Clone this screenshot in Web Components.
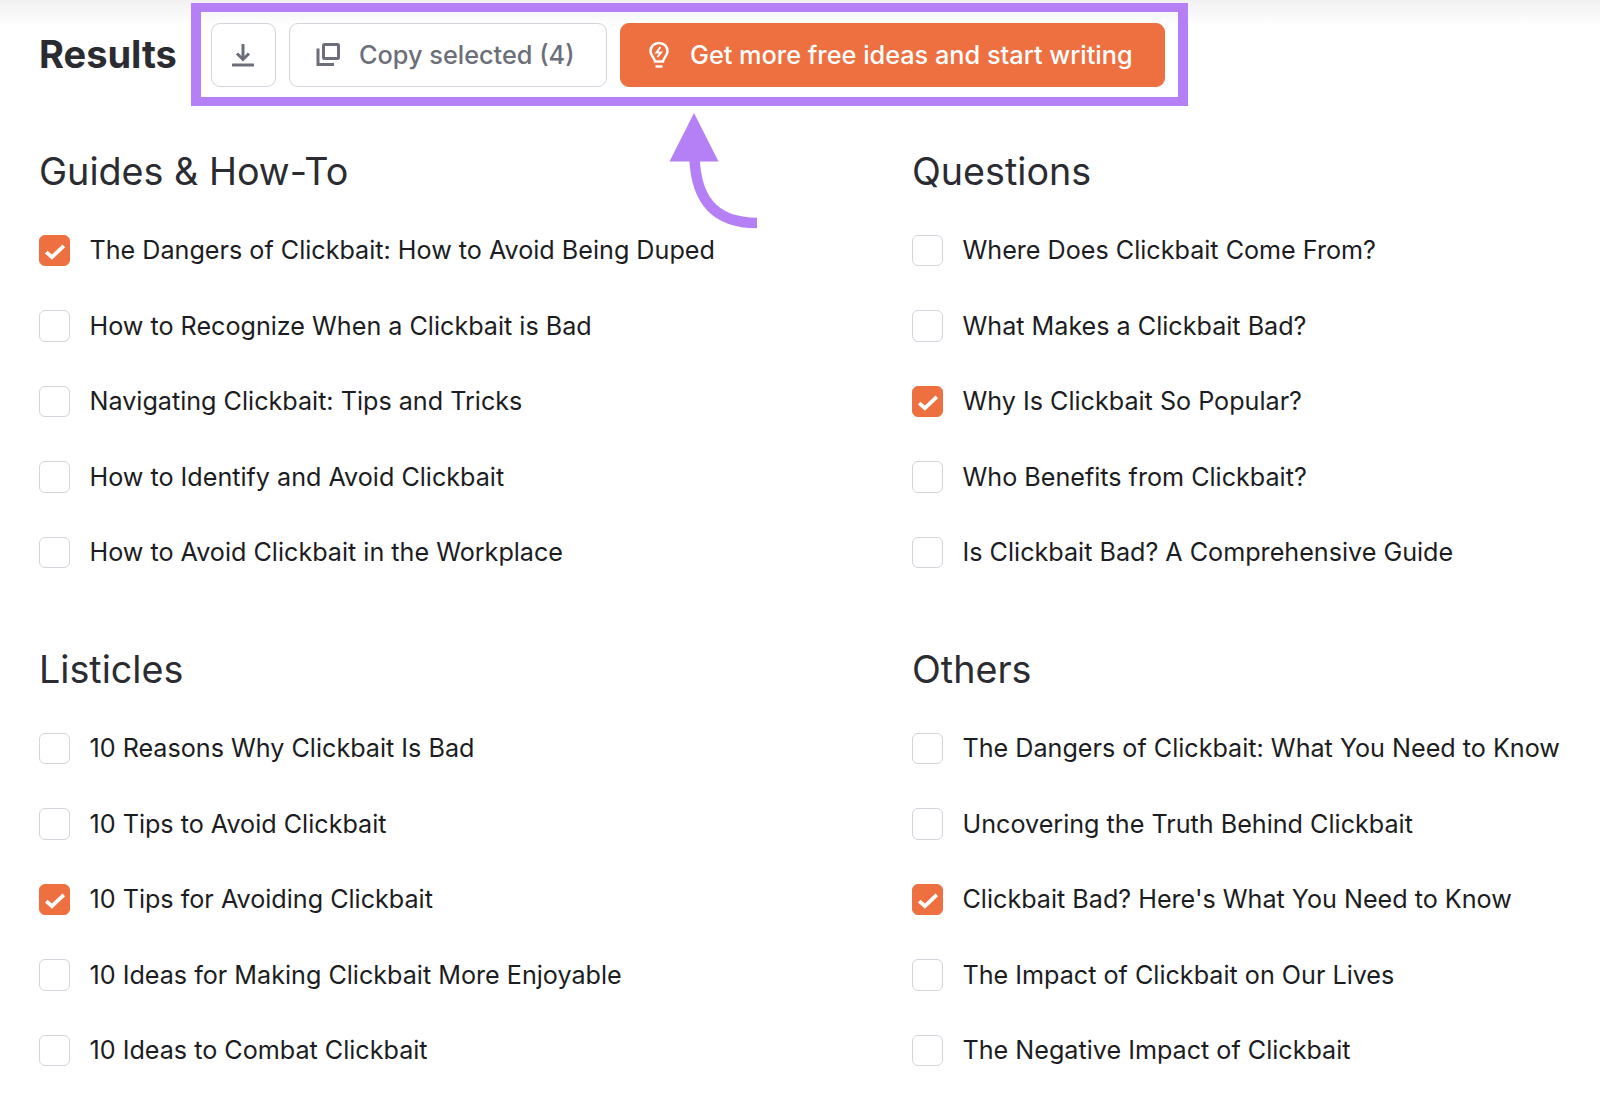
<!DOCTYPE html>
<html>
<head>
<meta charset="utf-8">
<title>Results</title>
<style>
  html, body { margin: 0; padding: 0; }
  body {
    height: 1107px;
    overflow: hidden;
    background: linear-gradient(#f1f1f2, #ffffff 26px) no-repeat #ffffff;
    font-family: Inter, "Liberation Sans", sans-serif;
    color: #1c1d22;
  }
</style>
</head>
<body>
<results-page>
  <results-toolbar slot="toolbar" count="4"></results-toolbar>
  <idea-group heading="Guides &amp; How-To">
    <idea-item checked>The Dangers of Clickbait: How to Avoid Being Duped</idea-item>
    <idea-item>How to Recognize When a Clickbait is Bad</idea-item>
    <idea-item>Navigating Clickbait: Tips and Tricks</idea-item>
    <idea-item>How to Identify and Avoid Clickbait</idea-item>
    <idea-item>How to Avoid Clickbait in the Workplace</idea-item>
  </idea-group>
  <idea-group heading="Questions">
    <idea-item>Where Does Clickbait Come From?</idea-item>
    <idea-item>What Makes a Clickbait Bad?</idea-item>
    <idea-item checked>Why Is Clickbait So Popular?</idea-item>
    <idea-item>Who Benefits from Clickbait?</idea-item>
    <idea-item>Is Clickbait Bad? A Comprehensive Guide</idea-item>
  </idea-group>
  <idea-group heading="Listicles">
    <idea-item>10 Reasons Why Clickbait Is Bad</idea-item>
    <idea-item>10 Tips to Avoid Clickbait</idea-item>
    <idea-item checked>10 Tips for Avoiding Clickbait</idea-item>
    <idea-item>10 Ideas for Making Clickbait More Enjoyable</idea-item>
    <idea-item>10 Ideas to Combat Clickbait</idea-item>
  </idea-group>
  <idea-group heading="Others">
    <idea-item>The Dangers of Clickbait: What You Need to Know</idea-item>
    <idea-item>Uncovering the Truth Behind Clickbait</idea-item>
    <idea-item checked>Clickbait Bad? Here's What You Need to Know</idea-item>
    <idea-item>The Impact of Clickbait on Our Lives</idea-item>
    <idea-item>The Negative Impact of Clickbait</idea-item>
  </idea-group>
</results-page>

<script>
class ResultsPage extends HTMLElement {
  connectedCallback() {
    this.attachShadow({ mode: 'open' });
    this.shadowRoot.innerHTML = `
      <style>
        :host { display: block; position: relative; padding: 3px 0 0 39px; }
        .groups {
          display: grid;
          grid-template-columns: 873px 1fr;
          row-gap: 78px;
          margin-top: 42px;
        }
        .arrow { position: absolute; left: 660px; top: 105px; width: 110px; height: 130px; }
      </style>
      <slot name="toolbar"></slot>
      <div class="groups"><slot></slot></div>
      <svg class="arrow" viewBox="660 105 110 130" fill="none">
        <path d="M694 113L718.500 161.500H669.500Z" fill="#b57ff5"/>
        <path d="M694.500 158C696 196 711 223 757 223" stroke="#b57ff5" stroke-width="10.500"/>
      </svg>
    `;
  }
}
customElements.define('results-page', ResultsPage);

class ResultsToolbar extends HTMLElement {
  connectedCallback() {
    this.attachShadow({ mode: 'open' });
    const count = this.getAttribute('count');
    this.shadowRoot.innerHTML = `
      <style>
        :host { display: flex; align-items: center; }
        h2 {
          margin: 0 15px 0 0;
          width: 137px;
          font-size: 38px;
          line-height: 44px;
          padding-bottom: 2px;
          font-weight: 700;
          color: #2b2c31;
          white-space: nowrap;
        }
        .callout {
          display: flex;
          gap: 13.5px;
          box-sizing: border-box;
          width: 997px;
          height: 103px;
          padding: 11px 13px 10px 10px;
          border: solid #b57ff5;
          border-width: 9.500px 10px;
        }
        button {
          display: flex;
          align-items: center;
          box-sizing: border-box;
          height: 63.500px;
          padding: 0;
          border: 1.500px solid #d3d4dc;
          border-radius: 9px;
          background: #ffffff;
          font: 500 25.300px Inter, "Liberation Sans", sans-serif;
          color: #6c6e79;
          white-space: nowrap;
        }
        .download { width: 64.500px; justify-content: center; }
        .copy { width: 317.500px; padding-left: 26px; gap: 19px; }
        .start {
          flex: 1;
          padding-left: 27px;
          gap: 20px;
          border-color: #ee6f3f;
          background: #ee6f3f;
          color: #ffffff;
        }
        svg { display: block; flex: none; }
      </style>
      <h2>Results</h2>
      <div class="callout">
        <button class="download" aria-label="Download">
          <svg width="24" height="24" viewBox="0 0 24 24" fill="none" stroke="#6c6e79" stroke-width="3">
            <path d="M12 1V16"/>
            <path d="M6 10.500L12 16.500L18 10.500"/>
            <path d="M1 22H23"/>
          </svg>
        </button>
        <button class="copy">
          <svg width="24" height="24" viewBox="0 0 24 24" fill="none" stroke="#6c6e79" stroke-width="3">
            <rect x="7.500" y="1.500" width="15" height="14" rx="1"/>
            <path d="M2 5.500V21.500H18"/>
          </svg>
          <span>Copy selected (${count})</span>
        </button>
        <button class="start">
          <svg width="22" height="28" viewBox="0 0 22 28" fill="none" stroke="#ffffff" stroke-width="2.500">
            <path d="M11 2C5.800 2 2.500 5.800 2.500 10.200C2.500 14.500 6 16 7 20.500H15C16 16 19.500 14.500 19.500 10.200C19.500 5.800 16.200 2 11 2Z"/>
            <path d="M12.500 6L8.500 11.500H13L9.500 16" stroke-width="2"/>
            <path d="M7.500 25.500H14.500"/>
          </svg>
          <span>Get more free ideas and start writing</span>
        </button>
      </div>
    `;
  }
}
customElements.define('results-toolbar', ResultsToolbar);

class IdeaGroup extends HTMLElement {
  connectedCallback() {
    this.attachShadow({ mode: 'open' });
    this.shadowRoot.innerHTML = `
      <style>
        :host { display: block; }
        h3 {
          margin: 0 0 40.500px 0;
          font-size: 37.700px;
          line-height: 46px;
          font-weight: 400;
          color: #2b2c31;
        }
        .items { display: flex; flex-direction: column; gap: 44px; }
      </style>
      <h3>${this.getAttribute('heading').replace(/&/g, '&amp;')}</h3>
      <div class="items"><slot></slot></div>
    `;
  }
}
customElements.define('idea-group', IdeaGroup);

class IdeaItem extends HTMLElement {
  connectedCallback() {
    this.attachShadow({ mode: 'open' });
    this.shadowRoot.innerHTML = `
      <style>
        :host {
          display: flex;
          align-items: center;
          gap: 19.500px;
          height: 31.500px;
          font-size: 25.150px;
          color: #1c1d22;
          white-space: nowrap;
        }
        .box {
          box-sizing: border-box;
          flex: none;
          width: 31px;
          height: 31.500px;
          border: 1.500px solid #d3d4dc;
          border-radius: 6px;
          background: #ffffff;
        }
        :host([checked]) .box { border-color: #ee6f3f; background: #ee6f3f; }
        svg { display: block; width: 100%; height: 100%; }
      </style>
      <span class="box">${this.hasAttribute('checked') ? `
        <svg viewBox="1.500 1.500 28 28.500" fill="none">
          <path d="M7.500 17L13 22L24.500 11" stroke="#ffffff" stroke-width="3.600"/>
        </svg>` : ''}</span>
      <span><slot></slot></span>
    `;
  }
}
customElements.define('idea-item', IdeaItem);
</script>
</body>
</html>
